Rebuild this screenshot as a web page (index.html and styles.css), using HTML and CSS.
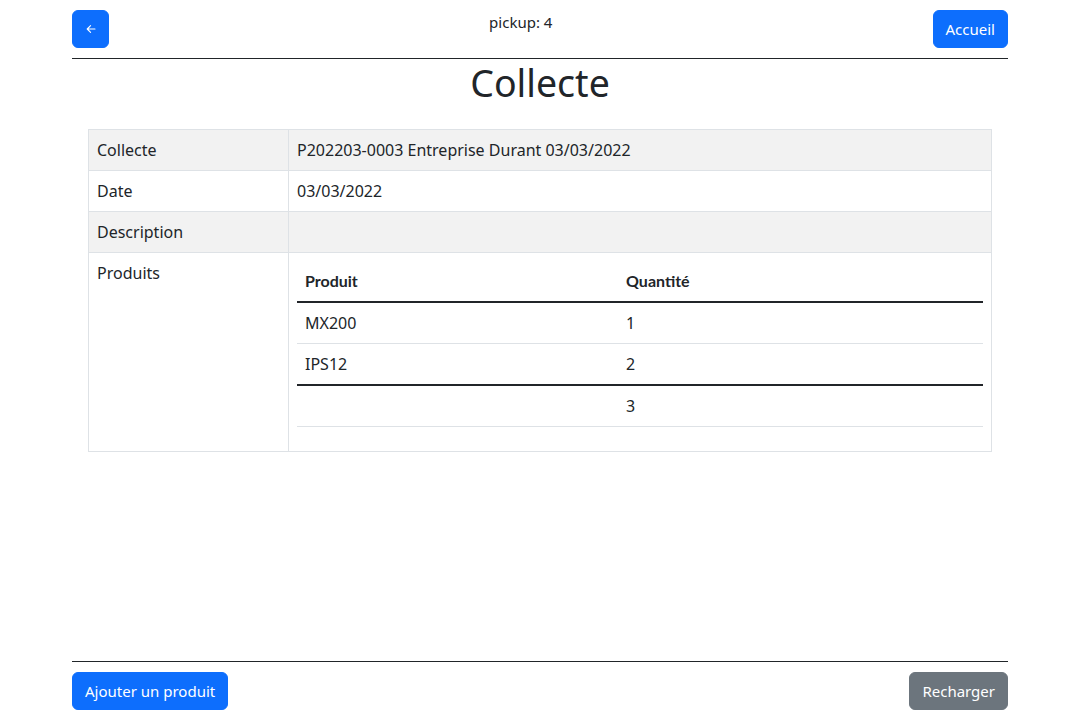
FILE: index.html
```html
<!DOCTYPE html>
<html lang="fr">
<head>
<meta charset="utf-8">
<title>Collecte</title>
<link rel="stylesheet" href="styles.css">
</head>
<body>
<div class="page">
  <header class="container">
    <div class="topbar">
      <button class="btn btn-primary btn-back" type="button" aria-label="Retour">
        <svg width="10" height="10" viewBox="0 0 10 10" fill="none" stroke="#fff" stroke-width="1.1" stroke-linecap="round" stroke-linejoin="round"><path d="M9 5H1.2M4.6 1.6L1.2 5l3.4 3.4"/></svg>
      </button>
      <div class="pickup">pickup: 4</div>
      <button class="btn btn-primary" type="button">Accueil</button>
    </div>
    <hr class="rule">
  </header>

  <main class="container">
    <h1 class="title">Collecte</h1>
    <div class="content">
      <table class="tbl">
        <tbody>
          <tr class="striped">
            <td class="label">Collecte</td>
            <td>P202203-0003 Entreprise Durant 03/03/2022</td>
          </tr>
          <tr>
            <td class="label">Date</td>
            <td>03/03/2022</td>
          </tr>
          <tr class="striped">
            <td class="label">Description</td>
            <td></td>
          </tr>
          <tr>
            <td class="label">Produits</td>
            <td>
              <table class="inner">
                <thead>
                  <tr>
                    <th class="col-prod">Produit</th>
                    <th>Quantité</th>
                  </tr>
                </thead>
                <tbody>
                  <tr><td>MX200</td><td>1</td></tr>
                  <tr><td>IPS12</td><td>2</td></tr>
                </tbody>
                <tfoot>
                  <tr><td></td><td>3</td></tr>
                </tfoot>
              </table>
            </td>
          </tr>
        </tbody>
      </table>
    </div>
  </main>

  <footer class="container footer">
    <hr class="rule">
    <div class="bottombar">
      <button class="btn btn-primary" type="button">Ajouter un produit</button>
      <button class="btn btn-secondary" type="button">Recharger</button>
    </div>
  </footer>
</div>
</body>
</html>
```

FILE: styles.css
```css
* { box-sizing: border-box; }

html, body {
  margin: 0;
  padding: 0;
}

body {
  font-family: "Noto Sans", "Open Sans", sans-serif;
  font-size: 16px;
  line-height: 1.5;
  color: #212529;
  background: #fff;
}

.page {
  min-height: 100vh;
  display: flex;
  flex-direction: column;
  padding: 10px 0;
}

.container {
  width: 936px;
  margin: 0 auto;
}

.topbar {
  display: flex;
  justify-content: space-between;
  align-items: flex-start;
}

.pickup {
  font-size: 15px;
  line-height: 24px;
}

.rule {
  border: 0;
  border-top: 1px solid #212529;
  margin: 10px 0 0;
  height: 0;
}

.btn {
  font-family: inherit;
  font-size: 15px;
  line-height: 24px;
  padding: 6px 12px;
  border: 1px solid transparent;
  border-radius: 6px;
  color: #fff;
  cursor: pointer;
  height: 38px;
}

.btn-primary {
  background: #0d6efd;
  border-color: #0d6efd;
}

.btn-secondary {
  background: #6c757d;
  border-color: #6c757d;
}

.btn-back {
  width: 37px;
  padding: 0;
  display: flex;
  align-items: center;
  justify-content: center;
}

.title {
  margin: 0 0 22px;
  text-align: center;
  font-size: 37.5px;
  font-weight: 400;
  line-height: 48px;
}

.content {
  padding: 0 16px;
}

.tbl {
  width: 100%;
  border-collapse: collapse;
  border: 1px solid #dee2e6;
}

.tbl > tbody > tr > td {
  border: 1px solid #dee2e6;
  padding: 8px;
  vertical-align: top;
  font-size: 16px;
  line-height: 24px;
}

.tbl > tbody > tr.striped > td {
  background: #f2f2f2;
}

.tbl .label {
  width: 200px;
}

.inner {
  width: 100%;
  border-collapse: collapse;
  margin-bottom: 16px;
}

.inner th,
.inner td {
  padding: 8px;
  text-align: left;
  font-size: 16px;
  line-height: 24px;
  border-bottom: 1px solid #dee2e6;
}

.inner th {
  font-family: Lato, sans-serif;
  font-weight: 700;
  border-bottom: 2px solid #212529;
}

.inner .col-prod {
  width: 46.8%;
}

.inner tfoot td {
  border-top: 2px solid #212529;
}

.footer {
  margin-top: auto;
}

.bottombar {
  display: flex;
  justify-content: space-between;
  margin-top: 10px;
}
```
